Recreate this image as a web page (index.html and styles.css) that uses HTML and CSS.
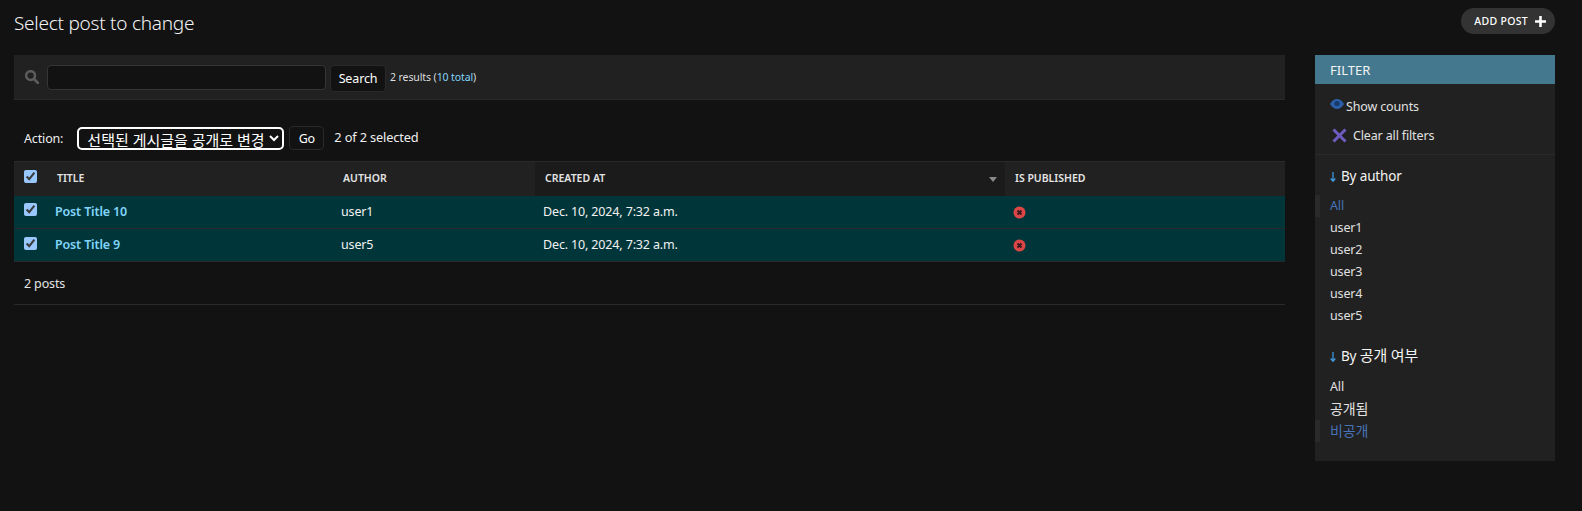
FILE: index.html
```html
<!DOCTYPE html>
<html lang="en">
<head>
	<meta charset="UTF-8">
	<title>Select post to change</title>
	<link rel="stylesheet" href="styles.css">
</head>
<body>
	<div class="content">
		<div class="page-head">
			<h1>Select post to change</h1>
			<a class="addlink" href="#">Add post
				<svg class="plus" viewBox="0 0 12 12" width="12" height="12"><path d="M4.6 0h2.8v4.6H12v2.8H7.4V12H4.6V7.4H0V4.6h4.6z"/></svg>
			</a>
		</div>
		<div class="columns">
			<div class="changelist">
				<div class="toolbar">
					<svg class="search-icon" viewBox="0 0 14 14" width="14" height="14"><circle cx="5.6" cy="5.6" r="4.4"/><path d="M9 9l4 4"/></svg>
					<input class="search-input" type="text">
					<button class="btn search-btn">Search</button>
					<span class="result-count">2 results (<a href="#">10 total</a>)</span>
				</div>
				<div class="actions">
					<label>Action:</label>
					<select class="action-select"><option>선택된 게시글을 공개로 변경</option></select>
					<button class="btn go-btn">Go</button>
					<span class="selected-count">2 of 2 selected</span>
				</div>
				<table class="result-list">
					<colgroup>
						<col class="col-check"><col class="col-title"><col class="col-author"><col class="col-created"><col>
					</colgroup>
					<thead>
						<tr>
							<th><input type="checkbox" checked></th>
							<th>Title</th>
							<th>Author</th>
							<th class="sorted">Created at<span class="sort-arrow"></span></th>
							<th>Is published</th>
						</tr>
					</thead>
					<tbody>
						<tr>
							<td><input type="checkbox" checked></td>
							<td class="title-cell"><a href="#">Post Title 10</a></td>
							<td>user1</td>
							<td>Dec. 10, 2024, 7:32 a.m.</td>
							<td><svg class="no-icon" viewBox="0 0 13 13" width="13" height="13"><circle cx="6.5" cy="6.5" r="6"/><path d="M4.5 4.5l4 4M8.5 4.5l-4 4"/></svg></td>
						</tr>
						<tr>
							<td><input type="checkbox" checked></td>
							<td class="title-cell"><a href="#">Post Title 9</a></td>
							<td>user5</td>
							<td>Dec. 10, 2024, 7:32 a.m.</td>
							<td><svg class="no-icon" viewBox="0 0 13 13" width="13" height="13"><circle cx="6.5" cy="6.5" r="6"/><path d="M4.5 4.5l4 4M8.5 4.5l-4 4"/></svg></td>
						</tr>
					</tbody>
				</table>
				<p class="paginator">2 posts</p>
			</div>
			<div class="filter">
				<h2>Filter</h2>
				<div class="filter-links">
					<a href="#"><svg class="eye" viewBox="0 0 14 10" width="14" height="10"><path d="M0 5c2-3.300 4.400-5 7-5s5 1.700 7 5c-2 3.300-4.400 5-7 5S2 8.300 0 5z"/><circle cx="7" cy="4.500" r="2.600" class="eye-dark"/></svg>Show counts</a>
					<a href="#" class="clear"><svg class="cross" viewBox="0 0 15 15" width="15" height="15"><path d="M1.500 1.500l12 12M13.500 1.500l-12 12"/></svg>Clear all filters</a>
				</div>
				<div class="filter-group">
					<h3><svg class="arrow" viewBox="0 0 6 10" width="6" height="10"><path d="M3 0v9M.7 6.500L3 9.300l2.300-2.800"/></svg>By author</h3>
					<ul>
						<li class="selected"><a href="#">All</a></li>
						<li><a href="#">user1</a></li>
						<li><a href="#">user2</a></li>
						<li><a href="#">user3</a></li>
						<li><a href="#">user4</a></li>
						<li><a href="#">user5</a></li>
					</ul>
				</div>
				<div class="filter-group filter-group-ko">
					<h3><svg class="arrow" viewBox="0 0 6 10" width="6" height="10"><path d="M3 0v9M.7 6.500L3 9.300l2.300-2.800"/></svg>By <span class="ko">공개 여부</span></h3>
					<ul>
						<li><a href="#">All</a></li>
						<li><a href="#" class="ko">공개됨</a></li>
						<li class="selected"><a href="#" class="ko">비공개</a></li>
					</ul>
				</div>
			</div>
		</div>
	</div>
</body>
</html>
```

FILE: styles.css
```css
*{
	margin:0;
	padding:0;
	box-sizing:border-box;
}

html{
	color-scheme:dark;
}

body{
	background:#121212;
	color:#eee;
	font-family:"Noto Sans","Noto Sans CJK KR",sans-serif;
	font-size:12.500px;
	letter-spacing:-.15px;
	height:511px;
	overflow:hidden;
}

a{
	text-decoration:none;
}

.content{
	padding:8px 27px 0 14px;
}

.page-head{
	display:flex;
	justify-content:space-between;
	align-items:flex-start;
	height:47px;
}

h1{
	font-size:19px;
	font-weight:300;
	line-height:30px;
	letter-spacing:-.25px;
	color:#f4f4f4;
}

.addlink{
	display:flex;
	align-items:center;
	gap:7px;
	height:26px;
	padding:0 9px 0 13px;
	border-radius:13px;
	background:#333;
	color:#fff;
	font-size:10.500px;
	font-weight:500;
	text-transform:uppercase;
	letter-spacing:.3px;
}

.plus{
	width:11px;
	height:11px;
	fill:#fff;
}

.columns{
	display:flex;
	gap:30px;
	align-items:flex-start;
}

.changelist{
	flex:1;
	min-width:0;
}

.toolbar{
	display:flex;
	align-items:center;
	height:45px;
	padding:0 0 0 11px;
	background:#212121;
	border-bottom:1px solid #2a2a2a;
}

.search-icon{
	fill:none;
	stroke:#5c5c5c;
	stroke-width:2.500;
	stroke-linecap:round;
	margin-right:8px;
}

.search-input{
	width:279px;
	height:25px;
	background:#121212;
	border:1px solid #353535;
	border-radius:4px;
	margin-right:4px;
}

.btn{
	background:#121212;
	border:1px solid #2a2a2a;
	border-radius:4px;
	color:#fff;
	font:inherit;
	letter-spacing:inherit;
}

.search-btn{
	width:56px;
	height:27px;
	margin-top:2px;
}

.result-count{
	margin-left:4px;
	font-size:10.500px;
	letter-spacing:-.1px;
	color:#ddd;
}

.result-count a{
	color:#81d4fa;
}

.actions{
	display:flex;
	align-items:center;
	height:61px;
	padding:15px 0 0 10px;
}

.actions label{
	margin-right:14px;
}

.action-select{
	width:207px;
	height:23px;
	padding:0 0 0 4px;
	background:#121212;
	color:#fff;
	border:2px solid #fff;
	border-radius:5px;
	font-size:15px;
	font-family:inherit;
	letter-spacing:0;
	outline:none;
}

.go-btn{
	width:35px;
	height:24px;
	margin-left:5px;
}

.selected-count{
	margin-left:10px;
	margin-top:-2px;
	font-size:12.800px;
}

.result-list{
	width:100%;
	table-layout:fixed;
	border-collapse:collapse;
}

.col-check{
	width:33px;
}

.col-title{
	width:286px;
}

.col-author{
	width:202px;
}

.col-created{
	width:470px;
}

.result-list th{
	height:34px;
	padding:0 10px 1px;
	background:#212121;
	border-top:1px solid #2a2a2a;
	color:#e4e4e4;
	font-size:10.500px;
	font-weight:600;
	letter-spacing:0;
	text-align:left;
	text-transform:uppercase;
	white-space:nowrap;
}

.result-list th.sorted{
	position:relative;
	background:#1b1b1b;
}

.sort-arrow{
	position:absolute;
	right:8px;
	top:15px;
	border-left:4.500px solid transparent;
	border-right:4.500px solid transparent;
	border-top:5px solid #8a8a8a;
}

.result-list td{
	height:33px;
	padding:0 8px 1px;
	background:#00363a;
	border-bottom:1px solid #2a2a2a;
	color:#f2f2f2;
	vertical-align:middle;
}

.result-list th:first-child,
.result-list td:first-child{
	padding:0 0 4px 10px;
}

.result-list input{
	display:block;
	width:13px;
	height:13px;
}

.title-cell a{
	color:#81d4fa;
	font-weight:600;
}

.no-icon{
	display:block;
	margin-top:2px;
}

.no-icon circle{
	fill:#dd4646;
}

.no-icon path{
	fill:none;
	stroke:#3a1a20;
	stroke-width:2;
}

.paginator{
	height:43px;
	line-height:43px;
	padding-left:10px;
	border-bottom:1px solid #2a2a2a;
	color:#e4e4e4;
}

.filter{
	width:240px;
	flex:none;
	height:406px;
	background:#212121;
}

.filter h2{
	height:29px;
	line-height:30px;
	padding-left:15px;
	background:#44788f;
	color:#f4f4f4;
	font-size:13px;
	font-weight:400;
	letter-spacing:0;
	text-transform:uppercase;
}

.filter-links{
	padding:8px 15px 4px;
	border-bottom:1px solid #2a2a2a;
}

.filter-links a{
	display:flex;
	align-items:center;
	height:29px;
	color:#e0e0e0;
}

.eye{
	margin:-6px 2px 0 0;
	fill:#2a5fa8;
}

.eye-dark{
	fill:#173a6b;
}

.cross{
	margin:0 6px 0 2px;
	fill:none;
	stroke:#6f5cc0;
	stroke-width:3;
}

.filter-group{
	padding-top:10px;
	margin-bottom:7px;
}

.filter-group h3{
	padding-left:15px;
	height:22px;
	line-height:22px;
	font-size:13.500px;
	font-weight:400;
	color:#f4f4f4;
	margin-bottom:8px;
}

.filter-group-ko h3{
	margin-bottom:10px;
}

.filter-group-ko h3 .ko{
	font-size:15px;
}

.arrow{
	margin-right:5px;
	vertical-align:-1px;
	fill:none;
	stroke:#3f9fe8;
	stroke-width:1.200;
}

.filter-group ul{
	list-style:none;
}

.filter-group li{
	height:22px;
	line-height:22px;
	padding-left:15px;
}

.filter-group li a{
	color:#e0e0e0;
}

.filter-group li a.ko{
	font-size:14px;
	vertical-align:1px;
}

.filter-group li.selected{
	padding-left:10px;
	border-left:5px solid #2a2a2a;
}

.filter-group li.selected a{
	color:#4774b8;
}
```
